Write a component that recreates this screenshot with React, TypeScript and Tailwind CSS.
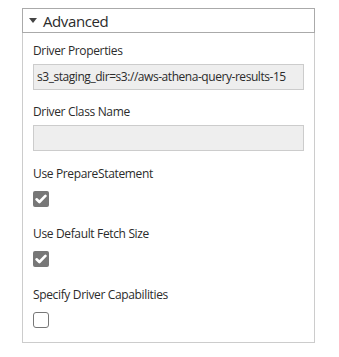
const font = { fontFamily: '"Open Sans", "Noto Sans", sans-serif' };

function Label({ children }: { children: string }) {
  return <div className="text-[12px] leading-[16px] tracking-[-0.35px] text-[#2b2b2b]">{children}</div>;
}

function TextBox({ value }: { value: string }) {
  return (
    <div className="mt-[5px] h-[26px] w-full border border-[#cccccc] bg-[#eeeeee] px-[3px] text-[12px] leading-[24px] tracking-[-0.45px] text-[#2b2b2b] whitespace-nowrap overflow-hidden">
      {value}
    </div>
  );
}

function Check({ checked }: { checked: boolean }) {
  if (checked) {
    return (
      <div className="mt-[9px] flex h-[16px] w-[16px] items-center justify-center rounded-[2px] bg-[#777777]">
        <svg width="12" height="10" viewBox="0 0 12 10">
          <path d="M1.6 5.3 L4.4 8 L10.4 1.9" fill="none" stroke="#fff" strokeWidth="2.6" strokeLinecap="round" strokeLinejoin="round" />
        </svg>
      </div>
    );
  }
  return <div className="mt-[9px] h-[16px] w-[16px] rounded-[3px] border-[1.5px] border-[#777777] bg-white" />;
}

export default function App() {
  return (
    <div className="bg-white pl-[22px] pt-[8px]" style={font}>
      <div className="w-[293px]">
        <div className="flex h-[25px] items-center border border-[#aaaaaa] pl-[6px]">
          <svg width="8" height="5" viewBox="0 0 8 5" className="mr-[6px]">
            <polygon points="0,0 8,0 4,5" fill="#444" />
          </svg>
          <span className="text-[15px] leading-[20px] tracking-[-0.4px] text-[#2b2b2b]">Advanced</span>
        </div>
        <div className="border-x border-b border-[#cccccc] px-[10px] pt-[10px] pb-[14px]">
          <Label>Driver Properties</Label>
          <TextBox value="s3_staging_dir=s3://aws-athena-query-results-15" />
          <div className="mt-[14px]">
            <Label>Driver Class Name</Label>
            <TextBox value="" />
          </div>
          <div className="mt-[15px]">
            <Label>Use PrepareStatement</Label>
            <Check checked />
          </div>
          <div className="mt-[19px]">
            <Label>Use Default Fetch Size</Label>
            <Check checked />
          </div>
          <div className="mt-[20px]">
            <Label>Specify Driver Capabilities</Label>
            <Check checked={false} />
          </div>
        </div>
      </div>
    </div>
  );
}
